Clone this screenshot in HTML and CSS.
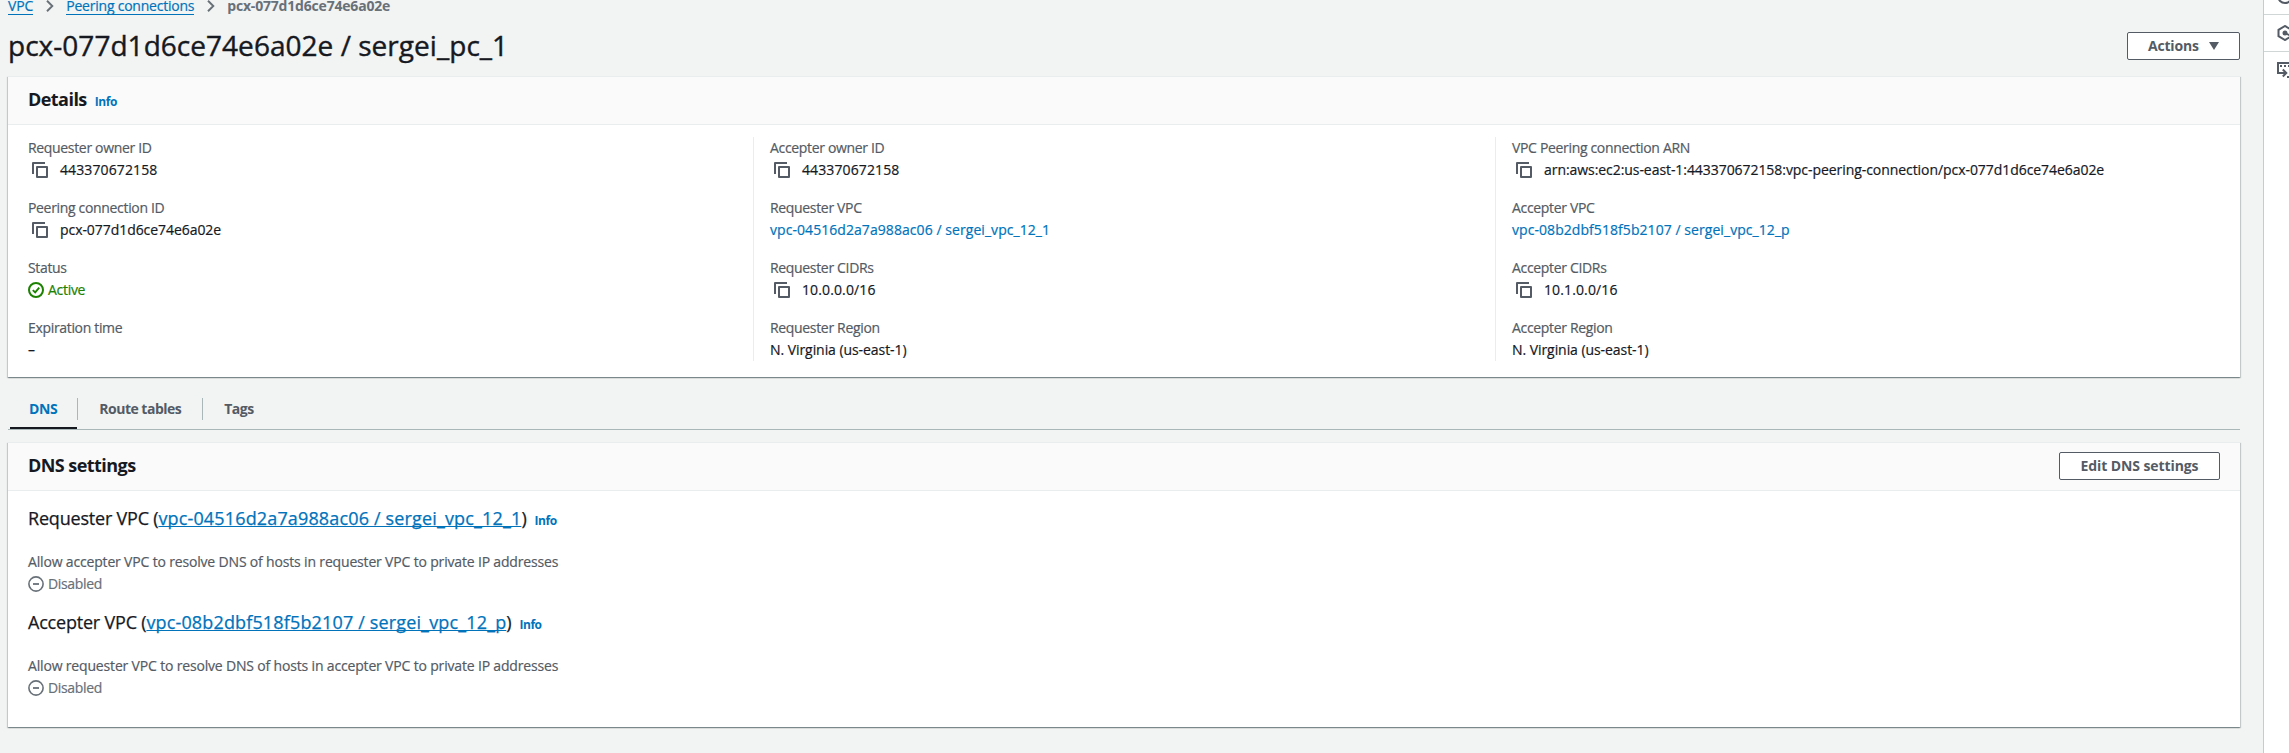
FILE: index.html
```
<!DOCTYPE html>
<html lang="en">
<head>
<meta charset="utf-8">
<title>pcx-077d1d6ce74e6a02e | Peering connections</title>
<link rel="stylesheet" href="styles.css">
</head>
<body>
<svg class="defs" aria-hidden="true">
  <symbol id="copy" viewBox="0 0 16 16"><path d="M1 12V1h12M5 5h10v10H5z" fill="none" stroke="currentColor" stroke-width="2" stroke-linejoin="round"/></symbol>
  <symbol id="check" viewBox="0 0 16 16"><g fill="none" stroke="currentColor"><circle cx="8" cy="8" r="7" stroke-width="2"/><path d="M4.8 8.1l2.4 2.3 4-4.7" stroke-width="1.9"/></g></symbol>
  <symbol id="minus" viewBox="0 0 16 16"><g fill="none" stroke="currentColor"><circle cx="8" cy="8" r="7.1" stroke-width="1.6"/><path d="M5 8h6" stroke-width="1.8"/></g></symbol>
  <symbol id="chev" viewBox="0 0 8 12"><path d="M1 .8L6.3 6 1 11.200" fill="none" stroke="currentColor" stroke-width="1.9"/></symbol>
</svg>
<div class="app">
  <main class="main">
    <nav class="crumbs">
      <a class="crumb crumb-vpc" href="#">VPC</a>
      <svg class="chev"><use href="#chev"/></svg>
      <a class="crumb" href="#">Peering connections</a>
      <svg class="chev"><use href="#chev"/></svg>
      <span class="crumb-current">pcx-077d1d6ce74e6a02e</span>
    </nav>
    <header class="page-head">
      <h1 class="title">pcx-077d1d6ce74e6a02e / sergei_pc_1</h1>
      <button class="btn btn-actions">Actions <svg class="caret" viewBox="0 0 10 8"><path d="M0 0h10L5 8z" fill="currentColor"/></svg></button>
    </header>

    <section class="card">
      <div class="card-head"><h2 class="card-title">Details</h2><a class="info" href="#">Info</a></div>
      <div class="columns">
        <dl class="col">
          <div><dt class="label">Requester owner ID</dt><dd class="value num"><svg class="copy"><use href="#copy"/></svg>443370672158</dd></div>
          <div><dt class="label">Peering connection ID</dt><dd class="value"><svg class="copy"><use href="#copy"/></svg>pcx-077d1d6ce74e6a02e</dd></div>
          <div><dt class="label">Status</dt><dd class="value active"><svg class="state"><use href="#check"/></svg>Active</dd></div>
          <div><dt class="label">Expiration time</dt><dd class="value">–</dd></div>
        </dl>
        <dl class="col">
          <div><dt class="label">Accepter owner ID</dt><dd class="value num"><svg class="copy"><use href="#copy"/></svg>443370672158</dd></div>
          <div><dt class="label">Requester VPC</dt><dd class="value"><a class="link" href="#">vpc-04516d2a7a988ac06 / sergei_vpc_12_1</a></dd></div>
          <div><dt class="label">Requester CIDRs</dt><dd class="value num"><svg class="copy"><use href="#copy"/></svg>10.0.0.0/16</dd></div>
          <div><dt class="label">Requester Region</dt><dd class="value">N. Virginia (us-east-1)</dd></div>
        </dl>
        <dl class="col">
          <div><dt class="label">VPC Peering connection ARN</dt><dd class="value"><svg class="copy"><use href="#copy"/></svg>arn:aws:ec2:us-east-1:443370672158:vpc-peering-connection/pcx-077d1d6ce74e6a02e</dd></div>
          <div><dt class="label">Accepter VPC</dt><dd class="value"><a class="link" href="#">vpc-08b2dbf518f5b2107 / sergei_vpc_12_p</a></dd></div>
          <div><dt class="label">Accepter CIDRs</dt><dd class="value num"><svg class="copy"><use href="#copy"/></svg>10.1.0.0/16</dd></div>
          <div><dt class="label">Accepter Region</dt><dd class="value">N. Virginia (us-east-1)</dd></div>
        </dl>
      </div>
    </section>

    <nav class="tabs">
      <a class="tab tab-on" href="#">DNS</a>
      <a class="tab" href="#">Route tables</a>
      <a class="tab" href="#">Tags</a>
    </nav>

    <section class="card">
      <div class="card-head"><h2 class="card-title">DNS settings</h2><button class="btn btn-edit">Edit DNS settings</button></div>
      <div class="dns">
        <h3 class="sub"><span>Requester VPC (</span><a class="sub-link" href="#">vpc-04516d2a7a988ac06 / sergei_vpc_12_1</a>)<a class="info" href="#">Info</a></h3>
        <div class="label hint">Allow accepter VPC to resolve DNS of hosts in requester VPC to private IP addresses</div>
        <div class="value disabled"><svg class="state"><use href="#minus"/></svg>Disabled</div>
        <h3 class="sub"><span>Accepter VPC (</span><a class="sub-link" href="#">vpc-08b2dbf518f5b2107 / sergei_vpc_12_p</a>)<a class="info" href="#">Info</a></h3>
        <div class="label hint">Allow requester VPC to resolve DNS of hosts in accepter VPC to private IP addresses</div>
        <div class="value disabled"><svg class="state"><use href="#minus"/></svg>Disabled</div>
      </div>
    </section>
  </main>
  <aside class="rail">
    <div class="rail-item rail-first"><svg class="rail-icon" viewBox="0 0 16 16"><circle cx="8" cy="8" r="7" fill="none" stroke="currentColor" stroke-width="2"/></svg></div>
    <div class="rail-item"><svg class="rail-icon" viewBox="0 0 16 16"><path d="M14.500 11.200L8 15 1.500 11.200V4.800L8 1l6.500 3.800v2" fill="none" stroke="currentColor" stroke-width="2"/><circle cx="8" cy="8" r="2.500" fill="currentColor"/><path d="M8 8l5 2.500" stroke="currentColor" stroke-width="2"/></svg></div>
    <div class="rail-item rail-last"><svg class="rail-icon" viewBox="0 0 16 16"><path d="M4 11H1V1h14v7M10 15h6" fill="none" stroke="currentColor" stroke-width="2"/><path d="M3 4h2M7 4h2M11 4h2" stroke="currentColor" stroke-width="2"/><path d="M3 11h6M5.800 7.500L9.300 11l-3.500 3.500" fill="none" stroke="currentColor" stroke-width="2"/></svg></div>
  </aside>
</div>
</body>
</html>
```
FILE: styles.css
```
* { box-sizing: border-box; }
body, h1, h2, h3, dl, dd { margin: 0; }
body {
  background: #f2f3f3;
  color: #16191f;
  font: 14px/22px "Open Sans", "Noto Sans", sans-serif;
  overflow: hidden;
}
a { color: #0073bb; text-decoration: none; }
.defs { position: absolute; width: 0; height: 0; }
.app { display: flex; height: 753px; overflow: hidden; }
.main { width: 2263px; padding: 0 23px 0 8px; margin-top: -5px; }

.crumbs { display: flex; height: 22px; align-items: flex-start; letter-spacing: -0.23px; }
.crumb { height: 20px; border-bottom: 1px solid #0073bb; white-space: nowrap; -webkit-text-stroke: 0.2px; }
.crumb-vpc { letter-spacing: -0.1px; }
.chev { width: 8px; height: 12px; margin: 5px 12px 0 13px; color: #687078; flex: none; }
.crumb-current { color: #687078; font-weight: 700; letter-spacing: -0.19px; }

.page-head { display: flex; justify-content: space-between; margin-top: 10px; height: 50px; }
.title { font-size: 28px; line-height: 36px; font-weight: 400; letter-spacing: 0.03px; -webkit-text-stroke: 0.4px; }
.btn {
  font: 700 14px/22px "Open Sans", "Noto Sans", sans-serif;
  color: #545b64;
  background: #fff;
  border: 1px solid #545b64;
  border-radius: 2px;
  height: 28px;
  padding: 2px 20px;
}
.btn-actions { width: 113px; margin-top: 5px; display: flex; align-items: center; justify-content: space-between; letter-spacing: -0.2px; }
.btn-edit { width: 161px; margin: -2px 0 0 auto; letter-spacing: -0.09px; padding: 2px 0; }
.caret { width: 10px; height: 8px; }

.card {
  background: #fff;
  border-top: 1px solid #eaeded;
  margin-top: -1px;
  box-shadow: 0 1px 1px 0 rgba(0, 28, 36, .3), 1px 1px 1px 0 rgba(0, 28, 36, .15), -1px 1px 1px 0 rgba(0, 28, 36, .15);
}
.card-head { display: flex; background: #fafafa; border-bottom: 1px solid #eaeded; height: 48px; padding: 11px 20px 0; }
.card-title { font-size: 18px; line-height: 22px; font-weight: 700; letter-spacing: -0.55px; }
.info { font-size: 12px; font-weight: 700; line-height: 22px; margin: 3px 0 -3px 8px; letter-spacing: -0.45px; -webkit-text-stroke: 0; }

.columns { display: grid; grid-template-columns: 725px 742px 1fr; padding: 12px 20px 16px; }
.col { display: grid; gap: 16px; }
.col + .col { border-left: 1px solid #eaeded; padding-left: 16px; }
.label { color: #545b64; letter-spacing: -0.33px; white-space: nowrap; -webkit-text-stroke: 0.2px; }
.value { display: flex; letter-spacing: -0.06px; white-space: nowrap; -webkit-text-stroke: 0.2px; }
.num { letter-spacing: 0.12px; }
.link { letter-spacing: 0.06px; }
.copy { width: 16px; height: 16px; margin: 3px 12px 0 4px; color: #545b64; flex: none; }
.state { width: 16px; height: 16px; margin: 3px 4px 0 0; flex: none; }
.active { color: #1d8102; letter-spacing: -0.3px; }
.disabled { color: #687078; letter-spacing: -0.33px; }

.tabs { display: flex; height: 32px; margin: 21px 0 13px; border-bottom: 1px solid #aab7b8; padding-left: 2px; }
.tab { position: relative; height: 22px; padding: 0 21px; color: #545b64; font-weight: 700; letter-spacing: -0.5px; }
.tab + .tab { border-left: 1px solid #aab7b8; }
.tab-on { color: #0073bb; padding: 0 20px 0 19px; letter-spacing: -0.4px; }
.tab-on::after { content: ""; position: absolute; left: 0; right: 0; bottom: -9px; height: 2px; background: #16191f; }

.dns { height: 236px; padding: 16px 20px 0; }
.sub { display: flex; font-size: 18px; line-height: 22px; font-weight: 400; white-space: pre; letter-spacing: -0.2px; margin-bottom: 22px; -webkit-text-stroke: 0.25px; }
.disabled + .sub { margin-top: 16px; }
.sub-link { letter-spacing: 0.15px; text-decoration: underline; text-decoration-thickness: 1px; text-underline-offset: 1px; text-decoration-skip-ink: none; }
.hint { letter-spacing: -0.17px; }

.rail { flex: 1; background: #fff; border-left: 1px solid #c6cccd; color: #545b64; overflow: hidden; }
.rail-item { display: flex; align-items: flex-start; height: 37px; border-bottom: 1px solid #d0d5d5; padding: 10px 0 0 13px; width: 60px; }
.rail-first { height: 15px; padding-top: 0; }
.rail-first .rail-icon { margin-top: -12px; }
.rail-last { border: 0; }
.rail-icon { display: block; width: 16px; height: 16px; flex: none; }
```
